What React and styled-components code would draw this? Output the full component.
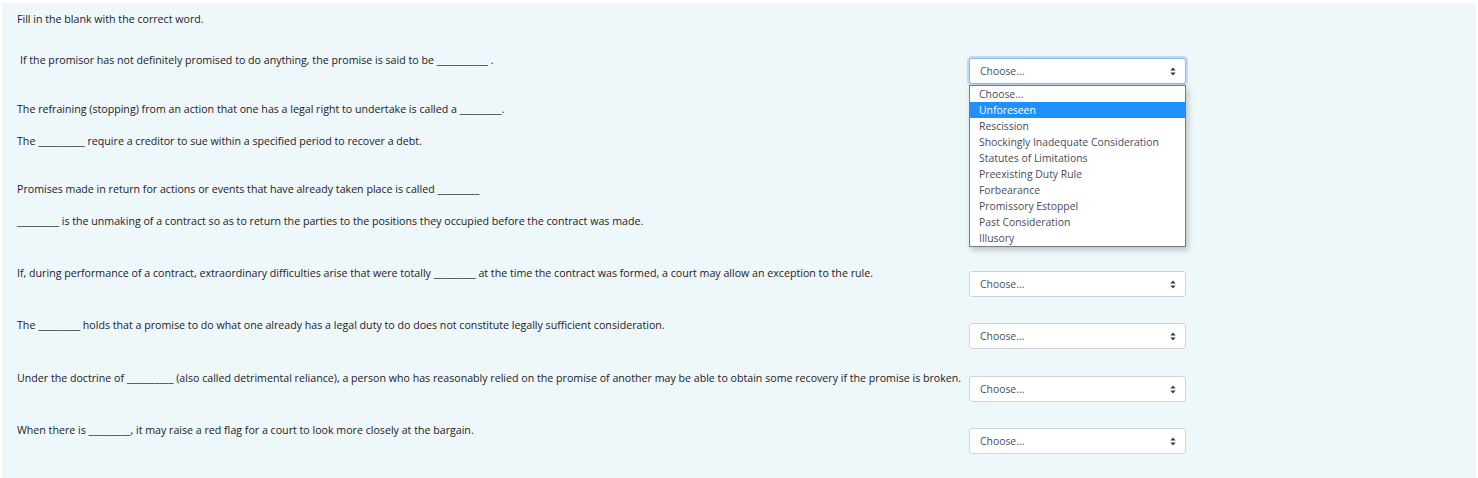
import React from "react";
import styled, { createGlobalStyle } from "styled-components";

const Global = createGlobalStyle`
  html, body { margin: 0; padding: 0; background: #ffffff; }
  body { font-family: "Open Sans", "Noto Sans", sans-serif; color: #1d2125; }
`;

const Page = styled.div`
  padding: 3px 2px 0 2px;
  height: 478px;
  box-sizing: border-box;
`;

const Panel = styled.div`
  background: #eef7fa;
  height: 100%;
  box-sizing: border-box;
  padding: 8px 0 0 15px;
`;

const Prompt = styled.div`
  font-size: 10.65px;
  line-height: 16px;
  height: 16px;
  margin-bottom: 25px;
`;

const Row = styled.div`
  display: grid;
  grid-template-columns: 952px 217px;
  height: ${(p) => p.$h}px;
  align-items: start;
`;

const Text = styled.div`
  font-size: 10.65px;
  line-height: 16px;
  white-space: nowrap;
  padding-left: ${(p) => (p.$indent ? 3 : 0)}px;
`;

const SelectWrap = styled.div`
  position: relative;
  margin-top: 6px;
`;

const SelectBox = styled.div`
  height: 26px;
  width: 217px;
  box-sizing: border-box;
  background: #ffffff;
  border: 1px solid ${(p) => (p.$focus ? "#8fb8f0" : "#ced4da")};
  border-radius: 3px;
  box-shadow: ${(p) => (p.$focus ? "0 0 0 2px rgba(80,140,230,0.28)" : "none")};
  display: flex;
  align-items: center;
  justify-content: space-between;
  padding: 0 9px 0 10px;
  font-size: 10.4px;
  color: #495057;
  visibility: ${(p) => (p.$covered ? "hidden" : "visible")};
`;

const Menu = styled.ul`
  position: absolute;
  top: 27px;
  left: 0;
  width: 217px;
  margin: 0;
  padding: 0;
  list-style: none;
  background: #ffffff;
  border: 1px solid #7a7a7a;
  box-sizing: border-box;
  box-shadow: 2px 3px 6px rgba(0, 0, 0, 0.22);
  z-index: 5;
`;

const Option = styled.li`
  height: 16px;
  line-height: 16px;
  padding-left: 9px;
  font-size: 10.4px;
  color: ${(p) => (p.$active ? "#ffffff" : "#4a4a5a")};
  background: ${(p) => (p.$active ? "#1e90ff" : "transparent")};
  white-space: nowrap;
`;

const Caret = () => (
  <svg width="6" height="9" viewBox="0 0 6 9">
    <path d="M3 0.5 L5.6 3.6 L0.4 3.6 Z" fill="#343a40" />
    <path d="M3 8.5 L5.6 5.4 L0.4 5.4 Z" fill="#343a40" />
  </svg>
);

const options = [
  "Choose...",
  "Unforeseen",
  "Rescission",
  "Shockingly Inadequate Consideration",
  "Statutes of Limitations",
  "Preexisting Duty Rule",
  "Forbearance",
  "Promissory Estoppel",
  "Past Consideration",
  "Illusory",
];

const b = (n) => "_".repeat(n);

const rows = [
  { t: `If the promisor has not definitely promised to do anything, the promise is said to be ${b(11)} .`, h: 49, indent: true },
  { t: `The refraining (stopping) from an action that one has a legal right to undertake is called a ${b(9)}.`, h: 32 },
  { t: `The ${b(10)} require a creditor to sue within a specified period to recover a debt.`, h: 48 },
  { t: `Promises made in return for actions or events that have already taken place is called ${b(9)}`, h: 32 },
  { t: `${b(9)} is the unmaking of a contract so as to return the parties to the positions they occupied before the contract was made.`, h: 52 },
  { t: `If, during performance of a contract, extraordinary difficulties arise that were totally ${b(9)} at the time the contract was formed, a court may allow an exception to the rule.`, h: 52 },
  { t: `The ${b(9)} holds that a promise to do what one already has a legal duty to do does not constitute legally sufficient consideration.`, h: 53 },
  { t: `Under the doctrine of ${b(10)} (also called detrimental reliance), a person who has reasonably relied on the promise of another may be able to obtain some recovery if the promise is broken.`, h: 52 },
  { t: `When there is ${b(9)}, it may raise a red flag for a court to look more closely at the bargain.`, h: 52 },
];

export default function App() {
  return (
    <>
      <Global />
      <Page>
        <Panel>
          <Prompt>Fill in the blank with the correct word.</Prompt>
          {rows.map((r, i) => (
            <Row key={i} $h={r.h}>
              <Text $indent={r.indent}>{r.t}</Text>
              <SelectWrap>
                <SelectBox $focus={i === 0} $covered={i >= 1 && i <= 4}>
                  <span>Choose...</span>
                  <Caret />
                </SelectBox>
                {i === 0 && (
                  <Menu>
                    {options.map((o, j) => (
                      <Option key={o} $active={j === 1}>{o}</Option>
                    ))}
                  </Menu>
                )}
              </SelectWrap>
            </Row>
          ))}
        </Panel>
      </Page>
    </>
  );
}
